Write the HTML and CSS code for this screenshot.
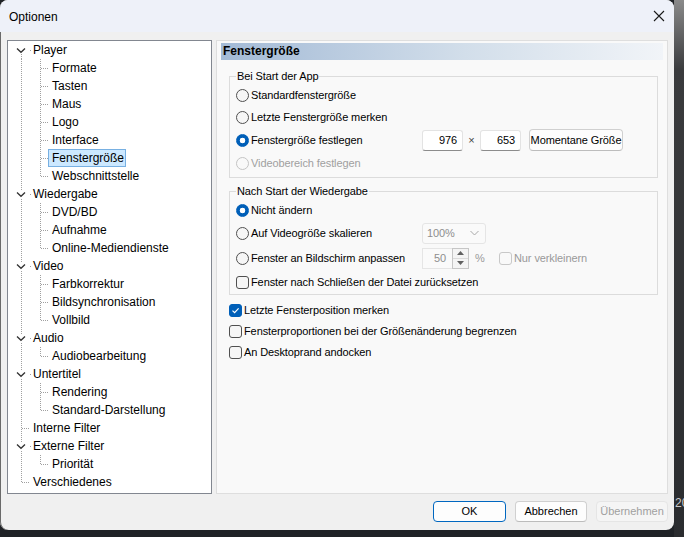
FILE: index.html
```html
<!DOCTYPE html>
<html lang="de">
<head>
<meta charset="utf-8">
<title>Optionen</title>
<link rel="stylesheet" href="styles.css">
</head>
<body>
<div class="window">
  <div class="titlebar">
    <span class="title">Optionen</span>
    <svg class="close" width="12" height="12" viewBox="0 0 12 12"><path d="M1 1 L11 11 M11 1 L1 11" stroke="#1a1a1a" stroke-width="1.1" fill="none"/></svg>
  </div>
  <div class="main">
    <div class="tree">
      <div class="row"><span class="c1 chev first"><svg width="10" height="8" viewBox="0 0 10 8"><rect width="10" height="8" fill="#fff"/><path d="M1 2.5 L5 6.3 L9 2.5" stroke="#333" stroke-width="1.3" fill="none"/></svg></span><span class="lbl root">Player</span></div>
      <div class="row"><span class="c1 vl"></span><span class="c2 tee"></span><span class="lbl">Formate</span></div>
      <div class="row"><span class="c1 vl"></span><span class="c2 tee"></span><span class="lbl">Tasten</span></div>
      <div class="row"><span class="c1 vl"></span><span class="c2 tee"></span><span class="lbl">Maus</span></div>
      <div class="row"><span class="c1 vl"></span><span class="c2 tee"></span><span class="lbl">Logo</span></div>
      <div class="row"><span class="c1 vl"></span><span class="c2 tee"></span><span class="lbl">Interface</span></div>
      <div class="row"><span class="c1 vl"></span><span class="c2 tee"></span><span class="lbl sel">Fenstergröße</span></div>
      <div class="row"><span class="c1 vl"></span><span class="c2 ell"></span><span class="lbl">Webschnittstelle</span></div>
      <div class="row"><span class="c1 chev"><svg width="10" height="8" viewBox="0 0 10 8"><rect width="10" height="8" fill="#fff"/><path d="M1 2.5 L5 6.3 L9 2.5" stroke="#333" stroke-width="1.3" fill="none"/></svg></span><span class="lbl root">Wiedergabe</span></div>
      <div class="row"><span class="c1 vl"></span><span class="c2 tee"></span><span class="lbl">DVD/BD</span></div>
      <div class="row"><span class="c1 vl"></span><span class="c2 tee"></span><span class="lbl">Aufnahme</span></div>
      <div class="row"><span class="c1 vl"></span><span class="c2 ell"></span><span class="lbl">Online-Mediendienste</span></div>
      <div class="row"><span class="c1 chev"><svg width="10" height="8" viewBox="0 0 10 8"><rect width="10" height="8" fill="#fff"/><path d="M1 2.5 L5 6.3 L9 2.5" stroke="#333" stroke-width="1.3" fill="none"/></svg></span><span class="lbl root">Video</span></div>
      <div class="row"><span class="c1 vl"></span><span class="c2 tee"></span><span class="lbl">Farbkorrektur</span></div>
      <div class="row"><span class="c1 vl"></span><span class="c2 tee"></span><span class="lbl">Bildsynchronisation</span></div>
      <div class="row"><span class="c1 vl"></span><span class="c2 ell"></span><span class="lbl">Vollbild</span></div>
      <div class="row"><span class="c1 chev"><svg width="10" height="8" viewBox="0 0 10 8"><rect width="10" height="8" fill="#fff"/><path d="M1 2.5 L5 6.3 L9 2.5" stroke="#333" stroke-width="1.3" fill="none"/></svg></span><span class="lbl root">Audio</span></div>
      <div class="row"><span class="c1 vl"></span><span class="c2 ell"></span><span class="lbl">Audiobearbeitung</span></div>
      <div class="row"><span class="c1 chev"><svg width="10" height="8" viewBox="0 0 10 8"><rect width="10" height="8" fill="#fff"/><path d="M1 2.5 L5 6.3 L9 2.5" stroke="#333" stroke-width="1.3" fill="none"/></svg></span><span class="lbl root">Untertitel</span></div>
      <div class="row"><span class="c1 vl"></span><span class="c2 tee"></span><span class="lbl">Rendering</span></div>
      <div class="row"><span class="c1 vl"></span><span class="c2 ell"></span><span class="lbl">Standard-Darstellung</span></div>
      <div class="row"><span class="c1 tee1"></span><span class="lbl">Interne Filter</span></div>
      <div class="row"><span class="c1 chev"><svg width="10" height="8" viewBox="0 0 10 8"><rect width="10" height="8" fill="#fff"/><path d="M1 2.5 L5 6.3 L9 2.5" stroke="#333" stroke-width="1.3" fill="none"/></svg></span><span class="lbl root">Externe Filter</span></div>
      <div class="row"><span class="c1 vl"></span><span class="c2 ell"></span><span class="lbl">Priorität</span></div>
      <div class="row"><span class="c1 ell1"></span><span class="lbl">Verschiedenes</span></div>
    </div>

    <div class="panel">
      <div class="hdr">Fenstergröße</div>

      <fieldset class="group g1">
        <legend>Bei Start der App</legend>
        <div class="opt h22"><span class="radio"></span><span>Standardfenstergröße</span></div>
        <div class="opt h22"><span class="radio"></span><span>Letzte Fenstergröße merken</span></div>
        <div class="opt h24">
          <div class="lead"><span class="radio on"></span><span>Fenstergröße festlegen</span></div>
          <span class="num">976</span><span class="times">×</span><span class="num">653</span>
          <span class="pbtn">Momentane Größe</span>
        </div>
        <div class="opt h22 dis"><span class="radio dis"></span><span>Videobereich festlegen</span></div>
      </fieldset>

      <fieldset class="group g2">
        <legend>Nach Start der Wiedergabe</legend>
        <div class="opt h22"><span class="radio on"></span><span>Nicht ändern</span></div>
        <div class="opt h24">
          <div class="lead"><span class="radio"></span><span>Auf Videogröße skalieren</span></div>
          <span class="combo"><span>100%</span><svg width="9" height="6" viewBox="0 0 9 6"><path d="M0.5 1 L4.5 5 L8.5 1" stroke="#a8a8a8" stroke-width="1" fill="none"/></svg></span>
        </div>
        <div class="opt h26">
          <div class="lead"><span class="radio"></span><span>Fenster an Bildschirm anpassen</span></div>
          <span class="spin"><span class="spinval">50</span><span class="arrows"><span class="arr"><svg width="7" height="4" viewBox="0 0 7 4"><path d="M0 4 L3.5 0 L7 4 Z" fill="#606060"/></svg></span><span class="arr"><svg width="7" height="4" viewBox="0 0 7 4"><path d="M0 0 L3.5 4 L7 0 Z" fill="#606060"/></svg></span></span></span>
          <span class="pct">%</span>
          <span class="cb dis"></span><span class="distext">Nur verkleinern</span>
        </div>
        <div class="opt h22"><span class="cb"></span><span>Fenster nach Schließen der Datei zurücksetzen</span></div>
      </fieldset>

      <div class="checks">
        <div class="opt c h22"><span class="cb on"><svg width="11" height="11" viewBox="0 0 11 11"><path d="M2.5 5.6 L4.6 7.6 L8.6 3.4" stroke="#fff" stroke-width="1.2" fill="none"/></svg></span><span>Letzte Fensterposition merken</span></div>
        <div class="opt c h20"><span class="cb"></span><span>Fensterproportionen bei der Größenänderung begrenzen</span></div>
        <div class="opt c h22"><span class="cb"></span><span>An Desktoprand andocken</span></div>
      </div>
    </div>
  </div>
  <div class="buttons">
    <span class="btn ok">OK</span>
    <span class="btn">Abbrechen</span>
    <span class="btn off">Übernehmen</span>
  </div>
</div>
<div class="side"><span>20</span></div>
</body>
</html>
```
FILE: styles.css
```css
html, body {
  margin: 0;
  padding: 0;
}
body {
  width: 684px;
  height: 537px;
  overflow: hidden;
  background: #1f2226;
  display: flex;
  align-items: flex-start;
  font-family: "Liberation Sans", Arial, sans-serif;
  color: #000;
}
.window {
  width: 674px;
  height: 530px;
  flex: none;
  background: #f0f0f0;
  border-radius: 8px;
  overflow: hidden;
  display: flex;
  flex-direction: column;
  box-shadow: inset 1px 0 0 #6a6a6a;
}
.side {
  flex: 1;
  height: 537px;
  background: linear-gradient(#8a8a8a, #3a3b3d 70px, #2a2c2f);
  color: #c9c9c9;
  font-size: 12px;
  white-space: nowrap;
  overflow: hidden;
  box-sizing: border-box;
  padding-top: 496px;
  padding-left: 1px;
}
.titlebar {
  height: 32px;
  flex: none;
  background: #eef1f9;
  display: flex;
  align-items: center;
  justify-content: space-between;
  padding: 0 9px 0 9px;
  font-size: 12px;
}
.title { padding-top: 2px; }
.close { margin-right: 0; }

.main {
  display: flex;
  gap: 4px;
  margin: 8px 0 0 7px;
  height: 454px;
  flex: none;
}

/* tree */
.tree {
  --v: repeating-linear-gradient(to bottom, #a0a0a0 0 1px, transparent 1px 2px);
  --h: repeating-linear-gradient(to right, #a0a0a0 0 1px, transparent 1px 2px);
  width: 205px;
  box-sizing: border-box;
  border: 1px solid #828790;
  background: #fff;
  font-size: 12px;
}
.row {
  display: flex;
  height: 18px;
  align-items: center;
}
.c1, .c2 {
  height: 18px;
  flex: none;
  background-repeat: no-repeat;
}
.c1 { width: 21px; }
.c2 { width: 19px; }
.vl {
  background-image: var(--v);
  background-size: 1px 18px;
  background-position: 13px 0;
}
.chev {
  display: flex;
  align-items: center;
  padding-left: 8px;
  box-sizing: border-box;
  background-image: var(--v);
  background-size: 1px 18px;
  background-position: 13px 0;
}
.chev.first {
  background-size: 1px 9px;
  background-position: 13px 9px;
}
.chev svg { display: block; }
.tee1 {
  background-image: var(--v), var(--h);
  background-size: 1px 18px, 8px 1px;
  background-position: 13px 0, 14px 9px;
}
.ell1 {
  background-image: var(--v), var(--h);
  background-size: 1px 9px, 8px 1px;
  background-position: 13px 0, 14px 9px;
}
.tee {
  background-image: var(--v), var(--h);
  background-size: 1px 18px, 8px 1px;
  background-position: 11px 0, 12px 9px;
}
.ell {
  background-image: var(--v), var(--h);
  background-size: 1px 9px, 8px 1px;
  background-position: 11px 0, 12px 9px;
}
.lbl {
  height: 18px;
  box-sizing: border-box;
  border: 1px solid transparent;
  padding: 0 3px;
  line-height: 16px;
  white-space: nowrap;
}
.lbl.root {
  background: linear-gradient(#a0a0a0, #a0a0a0) no-repeat 0 8px / 1px 1px;
}
.lbl.sel {
  background: #cce8ff;
  border-color: #78b0e2;
  padding-right: 1px;
}

/* panel */
.panel {
  width: 452px;
  box-sizing: border-box;
  border: 1px solid #dedede;
  background: #f9f9f9;
  padding: 2px 4px 0 4px;
  font-size: 11px;
  letter-spacing: -0.1px;
}
.hdr {
  height: 17px;
  line-height: 17px;
  background: linear-gradient(to right, #a3bad6, #d2deea 55%, #f1f4f8);
  font-weight: bold;
  font-size: 12px;
  letter-spacing: 0;
  padding-left: 2px;
}
.group {
  border: 1px solid #dcdcdc;
  margin: 0 5px 0 8px;
  padding: 1px 0 3px 6px;
  min-width: 0;
}
.group legend {
  padding: 0 1px;
  line-height: 14px;
  height: 14px;
  font-size: 11px;
}
.g1 { margin-top: 9px; }
.g2 { margin-top: 6px; padding-bottom: 1px; }

.opt {
  display: flex;
  align-items: center;
  white-space: nowrap;
}
.h20 { height: 20px; }
.h22 { height: 22px; }
.h24 { height: 24px; }
.h26 { height: 26px; }
.lead {
  width: 186px;
  flex: none;
  display: flex;
  align-items: center;
}
.radio {
  width: 13px;
  height: 13px;
  box-sizing: border-box;
  border: 1px solid #505050;
  border-radius: 50%;
  background: #f6f6f6;
  margin-right: 2px;
  flex: none;
}
.radio.on {
  border-color: #005fb8;
  background: radial-gradient(circle, #fff 0 2.6px, #005fb8 3.1px);
}
.radio.dis {
  border-color: #c4c4c4;
  background: #f9f9f9;
}
.dis { color: #a0a0a0; }

.num {
  width: 41px;
  height: 21px;
  box-sizing: border-box;
  border: 1px solid #e3e3e3;
  border-bottom-color: #8c8c8c;
  border-radius: 3px;
  background: #fff;
  text-align: right;
  padding-right: 5px;
  line-height: 19px;
}
.times {
  width: 17px;
  text-align: center;
  color: #444;
}
.pbtn {
  margin-left: 8px;
  width: 94px;
  height: 22px;
  box-sizing: border-box;
  border: 1px solid #d0d0d0;
  border-bottom-color: #bdbdbd;
  border-radius: 4px;
  background: #fdfdfd;
  text-align: center;
  line-height: 20px;
}
.combo {
  width: 64px;
  height: 21px;
  box-sizing: border-box;
  border: 1px solid #e5e5e5;
  border-radius: 3px;
  background: #fafafa;
  color: #8e8e8e;
  display: flex;
  align-items: center;
  justify-content: space-between;
  padding: 0 6px 0 4px;
}
.spin {
  display: flex;
  height: 21px;
}
.spinval {
  width: 30px;
  height: 21px;
  box-sizing: border-box;
  border: 1px solid #e5e5e5;
  border-right: none;
  background: #fafafa;
  color: #8e8e8e;
  text-align: right;
  padding-right: 6px;
  line-height: 19px;
}
.arrows {
  width: 17px;
  height: 21px;
  box-sizing: border-box;
  border: 1px solid #c6c6c6;
  display: flex;
  flex-direction: column;
  background: #f4f4f4;
}
.arr {
  flex: 1;
  display: flex;
  align-items: center;
  justify-content: center;
}
.arr:first-child { border-bottom: 1px solid #dadada; }
.arr svg { display: block; }
.pct {
  color: #9a9a9a;
  margin-left: 6px;
  width: 9px;
}
.cb {
  width: 13px;
  height: 13px;
  box-sizing: border-box;
  border: 1px solid #505050;
  border-radius: 3px;
  background: #f6f6f6;
  margin-right: 2px;
  flex: none;
  display: flex;
  align-items: center;
  justify-content: center;
}
.cb.on {
  border-color: #005fb8;
  background: #005fb8;
}
.cb.on svg { display: block; }
.cb.dis {
  border-color: #c8c8c8;
  background: #f9f9f9;
  margin-left: 15px;
}
.distext { color: #9a9a9a; }
.checks {
  margin: 4px 0 0 8px;
}

/* buttons */
.buttons {
  display: flex;
  justify-content: flex-end;
  gap: 9px;
  margin: 7px 6px 0 0;
}
.btn {
  width: 72px;
  height: 21px;
  box-sizing: border-box;
  border: 1px solid #d0d0d0;
  border-bottom-color: #bcbcbc;
  border-radius: 4px;
  background: #fdfdfd;
  font-size: 11px;
  text-align: center;
  line-height: 19px;
}
.btn.ok {
  width: 73px;
  border-color: #0067c0;
}
.btn.off {
  color: #a0a0a0;
  background: #f5f5f5;
  border-color: #e5e5e5;
}
```
